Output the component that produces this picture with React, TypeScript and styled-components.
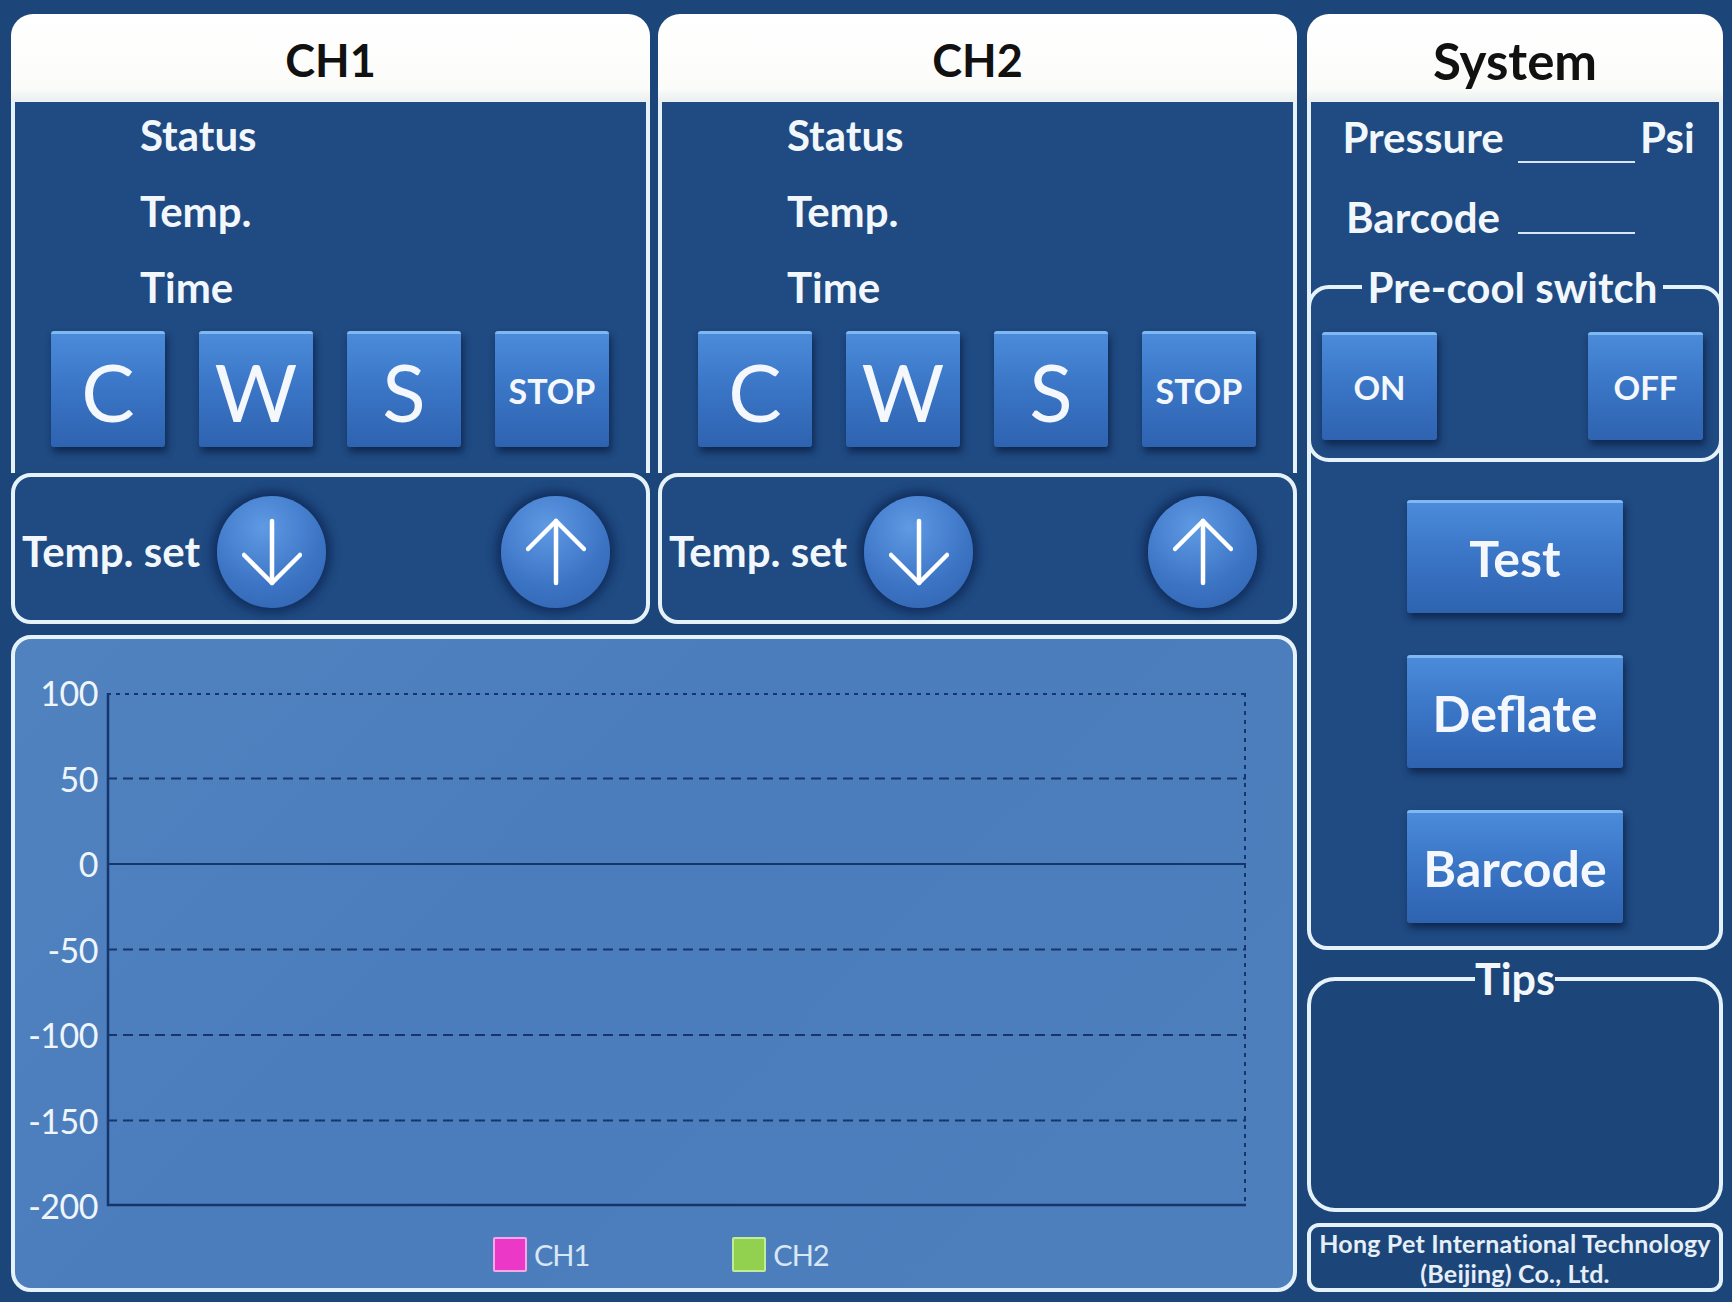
import React from "react";
import styled, { createGlobalStyle } from "styled-components";

const GlobalStyle = createGlobalStyle`
  html, body {
    margin: 0;
    padding: 0;
    background: #1c4679;
  }
  body {
    font-family: Lato, "Open Sans", sans-serif;
  }
`;

const LINE = "#e6f2fa";
const NAVY = "#1f4a82";

const Page = styled.div`
  width: 1732px;
  height: 1302px;
  box-sizing: border-box;
  padding: 14px 9px 10px 11px;
  display: flex;
  gap: 10px;
  background: #1c4679;
  color: #f2f7fc;
`;

const LeftCol = styled.div`
  width: 1286px;
  display: flex;
  flex-direction: column;
  gap: 11px;
`;

const ChannelRow = styled.div`
  display: flex;
  gap: 8px;
`;

const Card = styled.div<{ $h: number }>`
  width: 100%;
  height: ${(p) => p.$h}px;
  display: flex;
  flex-direction: column;
`;

const Header = styled.div<{ $size: number }>`
  height: 88px;
  flex: none;
  background: linear-gradient(#ffffff, #fbfcfa 85%, #e9eef0);
  border-radius: 22px 22px 0 0;
  display: flex;
  align-items: center;
  justify-content: center;
  padding-top: 4px;
  box-sizing: border-box;
  color: #111;
  font-weight: 700;
  font-size: ${(p) => p.$size}px;
`;

const ChBody = styled.div`
  flex: 1;
  background: ${NAVY};
  border-left: 4px solid ${LINE};
  border-right: 4px solid ${LINE};
  display: flex;
  flex-direction: column;
`;

const FieldList = styled.div`
  padding-left: 125px;
  margin-top: -5px;
`;

const FieldLabel = styled.div`
  height: 76px;
  line-height: 76px;
  font-size: 42px;
  font-weight: 700;
`;

const KeyRow = styled.div`
  display: flex;
  gap: 34px;
  padding-left: 36px;
  margin-top: 6px;
`;

const Key = styled.div<{ $w: number; $h: number; $size: number; $bold?: boolean }>`
  width: ${(p) => p.$w}px;
  height: ${(p) => p.$h}px;
  box-sizing: border-box;
  border-radius: 3px;
  border-top: 3px solid #80b9f2;
  background: linear-gradient(#4b8bda, #3b76c7 45%, #2e63b0);
  box-shadow: 2px 5px 7px rgba(6, 22, 52, 0.65);
  display: flex;
  align-items: center;
  justify-content: center;
  color: #f4f8fc;
  font-size: ${(p) => p.$size}px;
  font-weight: ${(p) => (p.$bold ? 700 : 400)};
  line-height: 1;
`;

const TempSet = styled.div`
  height: 151px;
  flex: none;
  box-sizing: border-box;
  border: 4px solid ${LINE};
  border-radius: 20px;
  background: ${NAVY};
  display: flex;
  align-items: center;
  padding: 0 36px 0 7px;
`;

const TempLabel = styled.div`
  width: 195px;
  font-size: 42px;
  font-weight: 700;
  padding-top: 4px;
`;

const RoundKey = styled.div<{ $push?: boolean }>`
  width: 109px;
  height: 112px;
  margin-top: 6px;
  margin-left: ${(p) => (p.$push ? "auto" : "0")};
  border-radius: 50%;
  background: radial-gradient(circle at 42% 28%, #5f9ae4, #3c74c4 58%, #2d60ab);
  box-shadow: 0 0 10px 5px rgba(12, 34, 78, 0.7);
  display: flex;
  align-items: center;
  justify-content: center;
`;

const ChartPanel = styled.div`
  height: 657px;
  box-sizing: border-box;
  border: 4px solid ${LINE};
  border-radius: 20px;
  background: linear-gradient(135deg, #5182c0, #4b7dbc 40%, #4d7fbd);
  padding-top: 54px;
  display: flex;
  flex-direction: column;
`;

const PlotRow = styled.div`
  display: flex;
  gap: 9px;
`;

const AxisLabels = styled.div`
  width: 83px;
  height: 513px;
  display: flex;
  flex-direction: column;
  justify-content: space-between;
`;

const Tick = styled.div`
  height: 0;
  display: flex;
  align-items: center;
  justify-content: flex-end;
  font-size: 34px;
  line-height: 1;
  color: #eef5fb;
  letter-spacing: -0.5px;
`;

const Legend = styled.div`
  display: flex;
  gap: 143px;
  padding-left: 478px;
  margin-top: 31px;
`;

const LegendItem = styled.div`
  display: flex;
  align-items: center;
  gap: 7px;
  font-size: 29px;
  color: #d9e7f5;
  letter-spacing: -1px;
`;

const Swatch = styled.span<{ $fill: string; $edge: string }>`
  width: 34px;
  height: 35px;
  box-sizing: border-box;
  background: ${(p) => p.$fill};
  border: 2px solid ${(p) => p.$edge};
  border-radius: 2px;
`;

const RightCol = styled.div`
  width: 416px;
  display: flex;
  flex-direction: column;
`;

const SysBody = styled.div`
  flex: 1;
  background: ${NAVY};
  border: 4px solid ${LINE};
  border-top: none;
  border-radius: 0 0 20px 20px;
  display: flex;
  flex-direction: column;
`;

const InfoGrid = styled.div`
  display: grid;
  grid-template-columns: 180px 117px auto;
  grid-auto-rows: 70px;
  column-gap: 5px;
  row-gap: 10px;
  padding-left: 22px;
`;

const InfoLabel = styled.div<{ $left?: boolean }>`
  align-self: center;
  text-align: ${(p) => (p.$left ? "left" : "center")};
  font-size: 42px;
  font-weight: 700;
`;

const Blank = styled.div<{ $gap: number }>`
  align-self: end;
  border-bottom: 2px solid #d6e6f4;
  margin-bottom: ${(p) => p.$gap}px;
`;

const Group = styled.fieldset`
  margin: 11px -4px 0;
  padding: 21px 16px 18px 11px;
  border: 4px solid ${LINE};
  border-radius: 22px;
  min-inline-size: 0;
  display: flex;
  justify-content: space-between;
`;

const GroupTitle = styled.legend<{ $size: number; $pad: number }>`
  margin: 0 auto;
  padding: 0 ${(p) => p.$pad}px;
  font-size: ${(p) => p.$size}px;
  font-weight: 700;
  line-height: 48px;
  color: #f2f7fc;
`;

const Actions = styled.div`
  display: flex;
  flex-direction: column;
  align-items: center;
  gap: 42px;
  padding-top: 38px;
`;

const Tips = styled.fieldset`
  margin: 5px 0 0;
  padding: 0;
  height: 257px;
  box-sizing: border-box;
  border: 4px solid ${LINE};
  border-radius: 28px;
  min-inline-size: 0;
`;

const Footer = styled.div`
  margin-top: 11px;
  height: 69px;
  box-sizing: border-box;
  border: 4px solid ${LINE};
  border-radius: 12px;
  display: flex;
  flex-direction: column;
  align-items: center;
  justify-content: center;
  font-size: 25px;
  font-weight: 700;
  line-height: 30px;
  color: #e6eef8;
  letter-spacing: 0.2px;
  white-space: nowrap;
`;

function Arrow({ up }: { up?: boolean }) {
  return (
    <svg width="60" height="70" viewBox="0 0 60 70">
      <g
        fill="none"
        stroke="#fff"
        strokeWidth="4.5"
        strokeLinecap="round"
        strokeLinejoin="round"
        transform={up ? "rotate(180 30 35)" : undefined}
      >
        <path d="M30 4 V66" />
        <path d="M2 38 L30 66 L58 38" />
      </g>
    </svg>
  );
}

function Channel({ name }: { name: string }) {
  return (
    <Card $h={610}>
      <Header $size={45}>{name}</Header>
      <ChBody>
        <FieldList>
          <FieldLabel>Status</FieldLabel>
          <FieldLabel>Temp.</FieldLabel>
          <FieldLabel>Time</FieldLabel>
        </FieldList>
        <KeyRow>
          <Key $w={114} $h={116} $size={80}>C</Key>
          <Key $w={114} $h={116} $size={80}>W</Key>
          <Key $w={114} $h={116} $size={80}>S</Key>
          <Key $w={114} $h={116} $size={34} $bold>STOP</Key>
        </KeyRow>
      </ChBody>
      <TempSet>
        <TempLabel>Temp. set</TempLabel>
        <RoundKey>
          <Arrow />
        </RoundKey>
        <RoundKey $push>
          <Arrow up />
        </RoundKey>
      </TempSet>
    </Card>
  );
}

const ticks = ["100", "50", "0", "-50", "-100", "-150", "-200"];

function Plot() {
  const w = 1139;
  const h = 513;
  const step = h / 6;
  const c = "#16366b";
  return (
    <svg width={w} height={h} style={{ overflow: "visible" }}>
      <line x1={0} y1={1} x2={w} y2={1} stroke={c} strokeWidth={2} strokeDasharray="4 5" />
      <line x1={w - 1} y1={0} x2={w - 1} y2={h} stroke={c} strokeWidth={2} strokeDasharray="4 5" />
      {[1, 3, 4, 5].map((i) => (
        <line key={i} x1={0} y1={i * step} x2={w} y2={i * step} stroke={c} strokeWidth={2} strokeDasharray="10 6" />
      ))}
      <line x1={0} y1={2 * step} x2={w} y2={2 * step} stroke={c} strokeWidth={2} />
      <line x1={1} y1={0} x2={1} y2={h} stroke={c} strokeWidth={2.5} />
      <line x1={0} y1={h - 1} x2={w} y2={h - 1} stroke={c} strokeWidth={2.5} />
    </svg>
  );
}

export default function App() {
  return (
    <>
      <GlobalStyle />
      <Page>
        <LeftCol>
          <ChannelRow>
            <Channel name="CH1" />
            <Channel name="CH2" />
          </ChannelRow>
          <ChartPanel>
            <PlotRow>
              <AxisLabels>
                {ticks.map((t) => (
                  <Tick key={t}>{t}</Tick>
                ))}
              </AxisLabels>
              <Plot />
            </PlotRow>
            <Legend>
              <LegendItem>
                <Swatch $fill="#ec38c6" $edge="#f7a6e8" />
                CH1
              </LegendItem>
              <LegendItem>
                <Swatch $fill="#92d050" $edge="#c2ec98" />
                CH2
              </LegendItem>
            </Legend>
          </ChartPanel>
        </LeftCol>

        <RightCol>
          <Card $h={936}>
            <Header $size={51}>System</Header>
            <SysBody>
              <InfoGrid>
                <InfoLabel>Pressure</InfoLabel>
                <Blank $gap={9} />
                <InfoLabel $left>Psi</InfoLabel>
                <InfoLabel>Barcode</InfoLabel>
                <Blank $gap={18} />
              </InfoGrid>
              <Group>
                <GroupTitle $size={42} $pad={6}>Pre-cool switch</GroupTitle>
                <Key $w={115} $h={108} $size={33} $bold>ON</Key>
                <Key $w={115} $h={108} $size={33} $bold>OFF</Key>
              </Group>
              <Actions>
                <Key $w={216} $h={113} $size={50} $bold>Test</Key>
                <Key $w={216} $h={113} $size={50} $bold>Deflate</Key>
                <Key $w={216} $h={113} $size={50} $bold>Barcode</Key>
              </Actions>
            </SysBody>
          </Card>
          <Tips>
            <GroupTitle $size={43} $pad={0}>Tips</GroupTitle>
          </Tips>
          <Footer>
            <div>Hong Pet International Technology</div>
            <div>(Beijing) Co., Ltd.</div>
          </Footer>
        </RightCol>
      </Page>
    </>
  );
}
